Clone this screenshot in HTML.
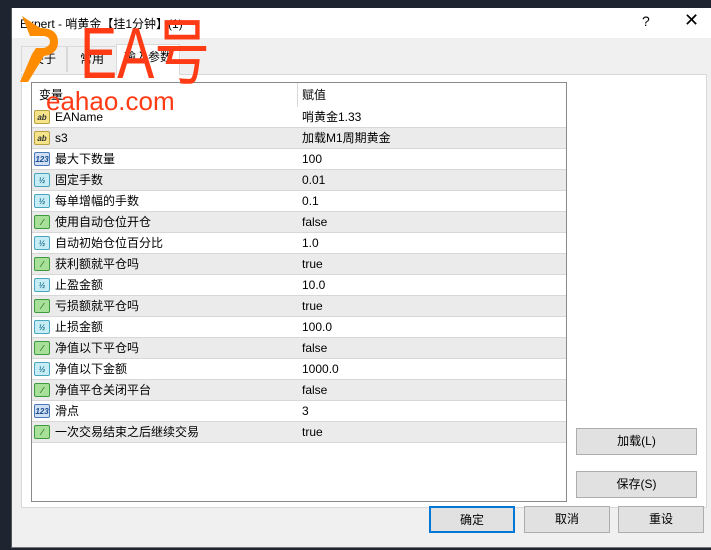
<!DOCTYPE html>
<html><head><meta charset="utf-8"><style>
*{margin:0;padding:0;box-sizing:border-box}
body{width:711px;height:550px;overflow:hidden;background:#1e2530;font-family:"Liberation Sans","Noto Sans CJK SC",sans-serif;font-size:12px;color:#000;position:relative}
.abs{position:absolute}
.wm{z-index:10}
#dlg{left:11px;top:8px;width:700px;height:540px;background:#f0f0f0;border-left:1px solid #555;border-bottom:1px solid #777}
#title{left:0;top:0;width:700px;height:30px;background:#fff}
.tab{position:absolute;top:38px;height:26px;border:1px solid #d9d9d9;border-bottom:none;background:#f0f0f0;text-align:center;line-height:24px;font-size:12px}
#panel{left:9px;top:66px;width:686px;height:434px;background:#fff;border:1px solid #d9d9d9}
#tbl{left:19px;top:74px;width:536px;height:420px;border:1px solid #8a8a8a;background:#fff;overflow:hidden}
.row{position:absolute;left:0;width:535px;height:21px;border-bottom:1px solid #d8d8d8;line-height:20px}
.row.alt{background:#ebebeb}
.row .n{position:absolute;left:23px}
.row .v{position:absolute;left:270px}
.row .d{position:absolute;left:265px;top:0;width:1px;height:21px;background:#d8d8d8}
.ic{position:absolute;left:2px;top:3px;width:16px;height:14px;border-radius:2px;font-size:8px;line-height:13px;text-align:center;font-weight:bold}
.ab{background:#f5e48a;border:1px solid #b9a240;color:#333}
.n123{background:#cfe0f5;border:1px solid #4a78b8;color:#1c4b8c}
.half{background:#c6ecf5;border:1px solid #4aa6c0;color:#1b6e88}
.bool{background:#a8e09a;border:1px solid #3d9a3d;color:#1d6a1d}
.btn{position:absolute;height:27px;background:#e1e1e1;border:1px solid #adadad;text-align:center;line-height:25px;font-size:12px}
</style></head><body>
<div id="dlg" class="abs">
 <div id="title" class="abs"><span class="abs" style="left:8px;top:7px;font-size:12px">Expert - 哨黄金【挂1分钟】(1)</span>
 <span class="abs" style="left:630px;top:5px;font-size:14px">?</span>
 <span class="abs" style="left:672px;top:2px;font-size:18px">✕</span></div>
 <div class="tab" style="left:9px;width:46px">关于</div>
 <div class="tab" style="left:55px;width:50px">常用</div>
 <div class="tab" style="left:104px;top:36px;height:31px;width:64px;background:#fff;z-index:2">输入参数</div>
 <div id="panel" class="abs"></div>
 <div id="tbl" class="abs">
  <div class="row" style="top:0;height:24px;line-height:24px;border-bottom:none"><span class="n" style="left:7px">变量</span><span class="v">赋值</span><span class="d" style="height:24px"></span></div>
  <div class="row" style="top:24px"><i class="ic ab">ab</i><span class="n">EAName</span><span class="v">哨黄金1.33</span></div>
  <div class="row alt" style="top:45px"><i class="ic ab">ab</i><span class="n">s3</span><span class="v">加载M1周期黄金</span></div>
  <div class="row" style="top:66px"><i class="ic n123">123</i><span class="n">最大下数量</span><span class="v">100</span></div>
  <div class="row alt" style="top:87px"><i class="ic half">½</i><span class="n">固定手数</span><span class="v">0.01</span></div>
  <div class="row" style="top:108px"><i class="ic half">½</i><span class="n">每单增幅的手数</span><span class="v">0.1</span></div>
  <div class="row alt" style="top:129px"><i class="ic bool">⁄</i><span class="n">使用自动仓位开仓</span><span class="v">false</span></div>
  <div class="row" style="top:150px"><i class="ic half">½</i><span class="n">自动初始仓位百分比</span><span class="v">1.0</span></div>
  <div class="row alt" style="top:171px"><i class="ic bool">⁄</i><span class="n">获利额就平仓吗</span><span class="v">true</span></div>
  <div class="row" style="top:192px"><i class="ic half">½</i><span class="n">止盈金额</span><span class="v">10.0</span></div>
  <div class="row alt" style="top:213px"><i class="ic bool">⁄</i><span class="n">亏损额就平仓吗</span><span class="v">true</span></div>
  <div class="row" style="top:234px"><i class="ic half">½</i><span class="n">止损金额</span><span class="v">100.0</span></div>
  <div class="row alt" style="top:255px"><i class="ic bool">⁄</i><span class="n">净值以下平仓吗</span><span class="v">false</span></div>
  <div class="row" style="top:276px"><i class="ic half">½</i><span class="n">净值以下金额</span><span class="v">1000.0</span></div>
  <div class="row alt" style="top:297px"><i class="ic bool">⁄</i><span class="n">净值平仓关闭平台</span><span class="v">false</span></div>
  <div class="row" style="top:318px"><i class="ic n123">123</i><span class="n">滑点</span><span class="v">3</span></div>
  <div class="row alt" style="top:339px"><i class="ic bool">⁄</i><span class="n">一次交易结束之后继续交易</span><span class="v">true</span></div>
 </div>
 <div class="btn" style="left:564px;top:420px;width:121px">加载(L)</div>
 <div class="btn" style="left:564px;top:463px;width:121px">保存(S)</div>
 <div class="btn" style="left:417px;top:498px;width:86px;border:2px solid #0078d7">确定</div>
 <div class="btn" style="left:512px;top:498px;width:86px">取消</div>
 <div class="btn" style="left:606px;top:498px;width:86px">重设</div>
</div>
<svg class="abs wm" style="left:18px;top:14px" width="50" height="70" viewBox="0 0 50 70"><path d="M4 2 L22 14 Q40 14 40 28 Q40 40 26 42 L10 68 L2 68 L14 40 L18 34 L26 34 Q32 32 32 28 Q32 22 24 22 L12 22 Z" fill="#ff8c00"/></svg>
<svg class="abs wm" style="left:0;top:0" width="240" height="90"><text x="80" y="78" font-size="72" textLength="130" lengthAdjust="spacingAndGlyphs" fill="#ff3b16" font-family="Liberation Sans, Noto Sans CJK SC, sans-serif">EA号</text></svg>
<div class="abs wm" style="left:46px;top:86px;font-size:26px;line-height:30px;color:#ff3b16">eahao.com</div>
</body></html>
